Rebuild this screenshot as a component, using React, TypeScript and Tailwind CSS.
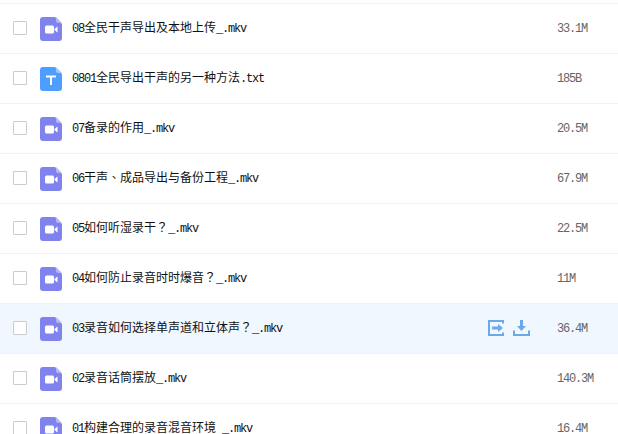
const rows = [
  { t: "v", n: ["08", "全民干声导出及本地上传", "_.mkv"], s: "33.1M" },
  { t: "t", n: ["0801", "全民导出干声的另一种方法", ".txt"], s: "185B" },
  { t: "v", n: ["07", "备录的作用", "_.mkv"], s: "20.5M" },
  { t: "v", n: ["06", "干声|、|成品导出与备份工程", "_.mkv"], s: "67.9M" },
  { t: "v", n: ["05", "如何听湿录干|？|", "_.mkv"], s: "22.5M" },
  { t: "v", n: ["04", "如何防止录音时时爆音|？|", "_.mkv"], s: "11M" },
  { t: "v", n: ["03", "录音如何选择单声道和立体声|？|", "_.mkv"], s: "36.4M", active: true },
  { t: "v", n: ["02", "录音话筒摆放", "_.mkv"], s: "140.3M" },
  { t: "v", n: ["01", "构建合理的录音混音环境", " _.mkv"], s: "16.4M" },
];

function VideoIcon() {
  return (
    <svg width="22" height="24" viewBox="0 0 22 24">
      <path d="M3 0H15L22 7V21a3 3 0 0 1-3 3H3a3 3 0 0 1-3-3V3a3 3 0 0 1 3-3Z" fill="#8083ee" />
      <path d="M16 0L22 6H18a2 2 0 0 1-2-2Z" fill="#b4b6f6" />
      <rect x="5" y="8.5" width="9" height="8" rx="1.5" fill="#fff" />
      <path d="M14.5 12L17.5 9.5V15.5L14.5 13Z" fill="#fff" />
    </svg>
  );
}

function TextIcon() {
  return (
    <svg width="22" height="24" viewBox="0 0 22 24">
      <path d="M3 0H15L22 7V21a3 3 0 0 1-3 3H3a3 3 0 0 1-3-3V3a3 3 0 0 1 3-3Z" fill="#4d9eff" />
      <path d="M16 0L22 6H18a2 2 0 0 1-2-2Z" fill="#9cc9ff" />
      <path d="M6 8.5H16V10.5H12V18H10V10.5H6Z" fill="#fff" />
    </svg>
  );
}

function Mono({ children }: { children: string }) {
  return <span className="font-['Liberation_Mono',monospace] text-xs tracking-[-1.2px]">{children}</span>;
}

function Cjk({ text }: { text: string }) {
  return (
    <>
      {text.split("|").map((part, i) =>
        i % 2 === 1 ? (
          <span key={i} className="font-['Noto_Sans_CJK_TC',sans-serif]">
            {part}
          </span>
        ) : (
          <span key={i}>{part}</span>
        ),
      )}
    </>
  );
}

export default function App() {
  return (
    <div className="h-[434px] w-[618px] overflow-hidden bg-white pt-[3px] font-['Noto_Sans_CJK_SC',sans-serif] text-xs text-[#111]">
      <div className="border-t border-[#f1f2f4]">
        {rows.map((r) => (
          <div
            key={r.n[0]}
            className={`flex h-[50px] items-center border-b border-[#f1f2f4] pb-px ${r.active ? "bg-[#f0f7ff]" : ""}`}
          >
            <div className="ml-[13px] h-[14px] w-[14px] shrink-0 rounded-[1px] border border-[#cccccc] bg-white" />
            <div className="ml-[13px] mt-[2px] flex w-[22px] shrink-0">{r.t === "v" ? <VideoIcon /> : <TextIcon />}</div>
            <div className="ml-[10px] whitespace-pre">
              <Mono>{r.n[0]}</Mono>
              <Cjk text={r.n[1]} />
              <Mono>{r.n[2]}</Mono>
            </div>
            <div className="flex-1" />
            {r.active && (
              <div className="mr-[27px] flex items-center gap-[9px]">
                <svg width="16" height="16" viewBox="0 0 16 16" fill="none">
                  <path d="M15 3.5V1H1V15H15V12.5" stroke="#6ca9ea" strokeWidth="2" />
                  <path d="M4 6.5H10V4L15 8L10 12V9.5H4Z" fill="#6ca9ea" />
                </svg>
                <svg width="17" height="16" viewBox="0 0 17 16" fill="none">
                  <path d="M7 0H10V6H13L8.5 11L4 6H7Z" fill="#6ca9ea" />
                  <path d="M1 10.5V15H16V10.5" stroke="#6ca9ea" strokeWidth="2" />
                </svg>
              </div>
            )}
            <div className="w-[61px] shrink-0 text-[#666]">
              <Mono>{r.s}</Mono>
            </div>
          </div>
        ))}
      </div>
    </div>
  );
}
